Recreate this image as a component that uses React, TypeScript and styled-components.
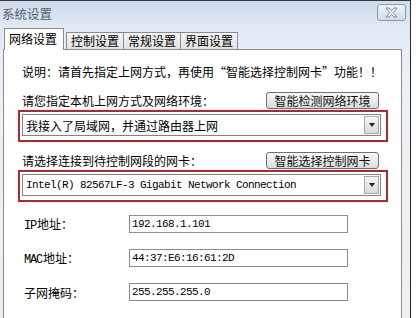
import React from "react";
import styled, { createGlobalStyle } from "styled-components";

const GlobalStyle = createGlobalStyle`
  html, body {
    margin: 0;
    padding: 0;
    background: #ffffff;
  }
  body {
    font-family: "Noto Sans CJK SC", "Liberation Sans", sans-serif;
    font-size: 12px;
    color: #000;
  }
`;

const CJK = `"Noto Sans CJK SC", "Liberation Sans", sans-serif`;
const MONO = `"Liberation Mono", "Noto Sans CJK SC", monospace`;

const Window = styled.div`
  width: 410px;
  height: 317px;
  overflow: hidden;
  border-top: 1px solid #3a3a3a;
  border-right: 1px solid #2a2a2a;
  background: linear-gradient(180deg, #cddbec 0px, #dfe8f3 24px, #e8eef6 50px, #eef1f5 120px, #eeeeee 100%);
`;

const TitleBar = styled.div`
  height: 24px;
  display: flex;
  align-items: flex-start;
  justify-content: space-between;
  padding: 3px 4px 0 2px;
  box-sizing: border-box;
`;

const Title = styled.span`
  font-family: ${CJK};
  font-size: 12.5px;
  line-height: 20px;
  color: #555b63;
`;

const CloseButton = styled.div`
  width: 29px;
  height: 17px;
  box-sizing: border-box;
  border: 1px solid #8a9ab2;
  border-radius: 3px;
  background: linear-gradient(180deg, #eef2f7, #d3dce8);
  display: flex;
  align-items: center;
  justify-content: center;
`;

const Content = styled.div`
  padding: 3px 8px 0 3px;
`;

const TabRow = styled.div`
  display: flex;
  align-items: flex-end;
  padding-left: 1px;
`;

const Tab = styled.div<{ $active?: boolean }>`
  font-family: ${CJK};
  font-size: 12px;
  box-sizing: border-box;
  border: 1px solid #898c95;
  border-bottom: none;
  white-space: nowrap;
  ${({ $active }) =>
    $active
      ? `
    height: 22px;
    line-height: 20px;
    padding: 0 6px 0 4px;
    background: #ffffff;
    margin-bottom: -1px;
    margin-right: 2px;
    position: relative;
    z-index: 1;
  `
      : `
    height: 17px;
    line-height: 16px;
    padding: 0 4px 0 4px;
    background: linear-gradient(180deg, #f3f3f3, #e4e4e4);
    margin-right: -1px;
  `}
`;

const Panel = styled.div`
  height: 290px;
  box-sizing: border-box;
  border: 1px solid #898c95;
  background: #ffffff;
  padding: 14px 12px 0 14px;
`;

const Note = styled.div`
  font-family: ${CJK};
  font-size: 12px;
  line-height: 16px;
  padding-left: 4px;
  white-space: nowrap;
`;

const LabelRow = styled.div<{ $top: number }>`
  display: flex;
  align-items: center;
  justify-content: space-between;
  height: 17px;
  margin-top: ${({ $top }) => $top}px;
  padding: 0 10px 0 4px;
  white-space: nowrap;
`;

const Label = styled.span`
  font-family: ${CJK};
  font-size: 12px;
  line-height: 16px;
`;

const Button = styled.div`
  width: 113px;
  height: 17px;
  box-sizing: border-box;
  border: 1px solid #707070;
  border-radius: 3px;
  background: linear-gradient(180deg, #f7f7f7 0%, #ececec 50%, #dadada 100%);
  font-family: ${CJK};
  font-size: 12px;
  line-height: 15px;
  text-align: center;
  color: #111;
`;

const Highlight = styled.div`
  margin-top: 1px;
  box-sizing: border-box;
  width: 370px;
  border: 2px solid #9b3036;
  box-shadow: 0 0 2px rgba(200, 80, 90, 0.35);
  padding: 2px 5px 4px 2px;
`;

const Select = styled.div`
  height: 22px;
  box-sizing: border-box;
  border: 1px solid #7f848c;
  background: #ffffff;
  display: flex;
  align-items: center;
  justify-content: space-between;
`;

const SelectText = styled.span<{ $mono?: boolean }>`
  padding-left: 3px;
  font-family: ${({ $mono }) => ($mono ? MONO : CJK)};
  font-size: ${({ $mono }) => ($mono ? "11px" : "12px")};
  letter-spacing: ${({ $mono }) => ($mono ? "-0.6px" : "0")};
  white-space: nowrap;
`;

const DropArrow = styled.div`
  width: 15px;
  height: 18px;
  margin-right: 1px;
  box-sizing: border-box;
  border: 1px solid #a9a9a9;
  background: linear-gradient(180deg, #f5f5f5, #d9d9d9);
  display: flex;
  align-items: center;
  justify-content: center;

  &::after {
    content: "";
    border-left: 3.5px solid transparent;
    border-right: 3.5px solid transparent;
    border-top: 4px solid #222;
  }
`;

const Fields = styled.div`
  margin-top: 13px;
  display: flex;
  flex-direction: column;
  gap: 16px;
  padding-left: 6px;
`;

const FieldRow = styled.div`
  display: flex;
  align-items: center;
  height: 18px;
`;

const FieldLabel = styled.span`
  width: 105px;
  font-family: ${CJK};
  font-size: 12px;
  white-space: nowrap;
`;

const Ascii = styled.span`
  font-family: ${MONO};
  font-size: 12px;
  letter-spacing: -1.2px;
  margin-right: 1px;
`;

const FieldInput = styled.div`
  width: 219px;
  height: 18px;
  box-sizing: border-box;
  border: 1px solid #8c8c8c;
  padding-left: 2px;
  font-family: ${MONO};
  font-size: 11px;
  letter-spacing: -0.6px;
  line-height: 16px;
  color: #000;
`;

const CloseIcon = () => (
  <svg width="13" height="11" viewBox="0 0 13 11">
    <polygon
      points="1,1 4,1 6.5,3.6 9,1 12,1 8.2,5.5 12,10 9,10 6.5,7.4 4,10 1,10 4.8,5.5"
      fill="#f6f8fb"
      stroke="#76879e"
      strokeWidth="1"
      strokeLinejoin="round"
    />
  </svg>
);

const tabs = ["网络设置", "控制设置", "常规设置", "界面设置"];

const fields: { ascii?: string; cjk: string; value: string }[] = [
  { ascii: "IP", cjk: "地址：", value: "192.168.1.101" },
  { ascii: "MAC", cjk: "地址：", value: "44:37:E6:16:61:2D" },
  { cjk: "子网掩码：", value: "255.255.255.0" },
];

export default function App() {
  return (
    <>
      <GlobalStyle />
      <Window>
        <TitleBar>
          <Title>系统设置</Title>
          <CloseButton>
            <CloseIcon />
          </CloseButton>
        </TitleBar>

        <Content>
          <TabRow>
            {tabs.map((t, i) => (
              <Tab key={t} $active={i === 0}>
                {t}
              </Tab>
            ))}
          </TabRow>

          <Panel>
            <Note>说明：请首先指定上网方式，再使用“智能选择控制网卡”功能！！</Note>

            <LabelRow $top={12}>
              <Label>请您指定本机上网方式及网络环境：</Label>
              <Button>智能检测网络环境</Button>
            </LabelRow>
            <Highlight>
              <Select>
                <SelectText>我接入了局域网，并通过路由器上网</SelectText>
                <DropArrow />
              </Select>
            </Highlight>

            <LabelRow $top={10}>
              <Label>请选择连接到待控制网段的网卡：</Label>
              <Button>智能选择控制网卡</Button>
            </LabelRow>
            <Highlight>
              <Select>
                <SelectText $mono>Intel(R) 82567LF-3 Gigabit Network Connection</SelectText>
                <DropArrow />
              </Select>
            </Highlight>

            <Fields>
              {fields.map((f) => (
                <FieldRow key={f.value}>
                  <FieldLabel>
                    {f.ascii && <Ascii>{f.ascii}</Ascii>}
                    {f.cjk}
                  </FieldLabel>
                  <FieldInput>{f.value}</FieldInput>
                </FieldRow>
              ))}
            </Fields>
          </Panel>
        </Content>
      </Window>
    </>
  );
}
